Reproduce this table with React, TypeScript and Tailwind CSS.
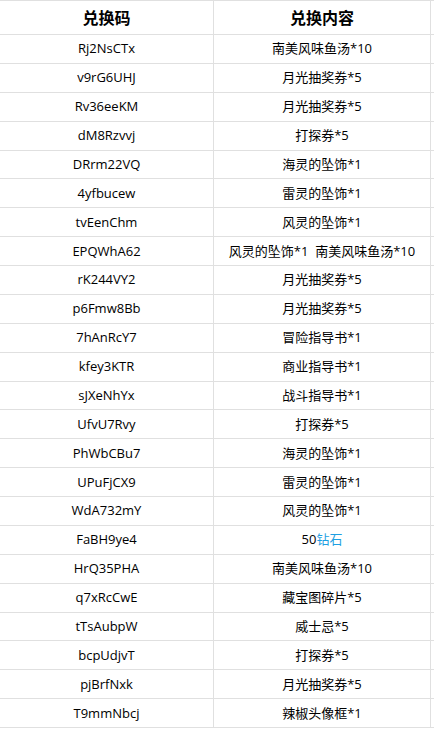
import React from "react";

const rows: [string, React.ReactNode][] = [
  ["Rj2NsCTx", "南美风味鱼汤*10"],
  ["v9rG6UHJ", "月光抽奖券*5"],
  ["Rv36eeKM", "月光抽奖券*5"],
  ["dM8Rzvvj", "打探券*5"],
  ["DRrm22VQ", "海灵的坠饰*1"],
  ["4yfbucew", "雷灵的坠饰*1"],
  ["tvEenChm", "风灵的坠饰*1"],
  ["EPQWhA62", "风灵的坠饰*1  南美风味鱼汤*10"],
  ["rK244VY2", "月光抽奖券*5"],
  ["p6Fmw8Bb", "月光抽奖券*5"],
  ["7hAnRcY7", "冒险指导书*1"],
  ["kfey3KTR", "商业指导书*1"],
  ["sJXeNhYx", "战斗指导书*1"],
  ["UfvU7Rvy", "打探券*5"],
  ["PhWbCBu7", "海灵的坠饰*1"],
  ["UPuFjCX9", "雷灵的坠饰*1"],
  ["WdA732mY", "风灵的坠饰*1"],
  [
    "FaBH9ye4",
    <>
      50<span className="text-[#1e9fe2]">钻石</span>
    </>,
  ],
  ["HrQ35PHA", "南美风味鱼汤*10"],
  ["q7xRcCwE", "藏宝图碎片*5"],
  ["tTsAubpW", "威士忌*5"],
  ["bcpUdjvT", "打探券*5"],
  ["pjBrfNxk", "月光抽奖券*5"],
  ["T9mmNbcj", "辣椒头像框*1"],
];

export default function App() {
  return (
    <div
      className="w-[434px] h-[730px] bg-white text-black overflow-hidden"
      style={{ fontFamily: '"Open Sans", "Noto Sans CJK SC", sans-serif' }}
    >
      <div className="flex h-[35px] border-y border-[#e0e0e0] text-[16px] font-bold">
        <div className="w-[214px] border-r border-[#e0e0e0] flex items-center justify-center">
          兑换码
        </div>
        <div className="w-[217px] border-r border-[#e0e0e0] flex items-center justify-center">
          兑换内容
        </div>
        <div className="flex-1" />
      </div>
      {rows.map(([code, content], i) => (
        <div
          key={i}
          className="flex h-[28.875px] border-b border-[#e0e0e0] text-[13px] leading-none"
        >
          <div className="w-[214px] border-r border-[#e0e0e0] flex items-center justify-center">
            {code}
          </div>
          <div className="w-[217px] border-r border-[#e0e0e0] flex items-center justify-center whitespace-pre">
            {content}
          </div>
          <div className="flex-1" />
        </div>
      ))}
    </div>
  );
}
